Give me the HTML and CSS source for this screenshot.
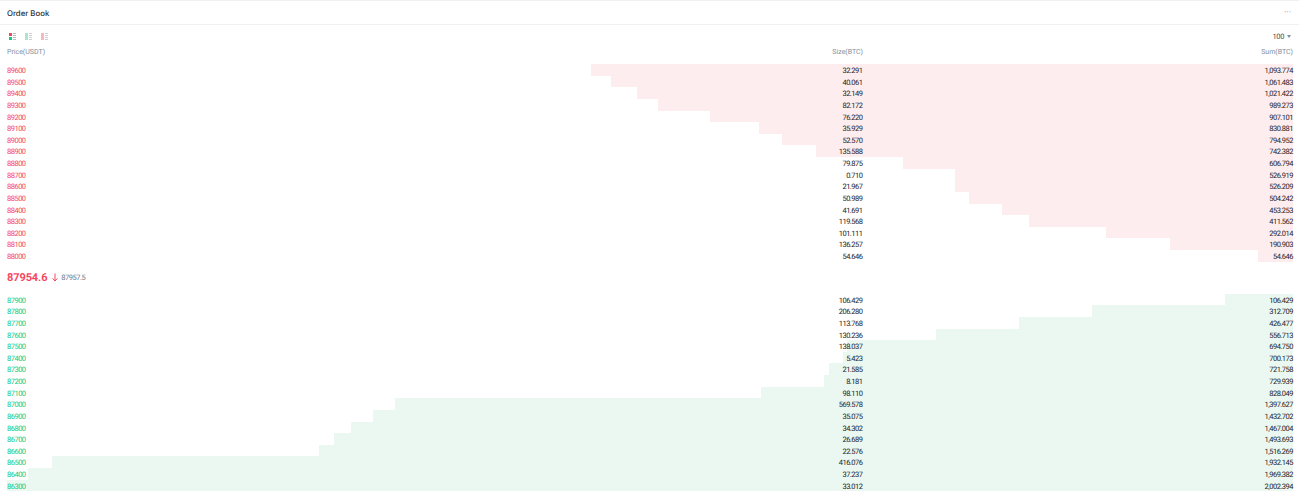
FILE: index.html
```html
<!DOCTYPE html>
<html>
<head>
<meta charset="utf-8">
<title>Order Book</title>
<link rel="stylesheet" href="styles.css">
</head>
<body>

<!-- header -->
<div class="head">
    <span class="title">Order Book</span>
    <span class="more">···</span>
</div>

<!-- view switch and depth -->
<div class="tools">
    <div class="views">
        <svg class="view" viewBox="0 0 7 7"><rect width="3" height="3" fill="#f6465d"/><rect y="4" width="3" height="3" fill="#0ecb81"/><rect x="4" width="3" height="1" fill="#b7bdc6"/><rect x="4" y="2" width="3" height="1" fill="#b7bdc6"/><rect x="4" y="4" width="3" height="1" fill="#b7bdc6"/><rect x="4" y="6" width="3" height="1" fill="#b7bdc6"/></svg>
        <svg class="view" viewBox="0 0 7 7"><rect width="3" height="7" fill="#a9e6cb"/><rect x="4" width="3" height="1" fill="#ccd0d6"/><rect x="4" y="2" width="3" height="1" fill="#ccd0d6"/><rect x="4" y="4" width="3" height="1" fill="#ccd0d6"/><rect x="4" y="6" width="3" height="1" fill="#ccd0d6"/></svg>
        <svg class="view" viewBox="0 0 7 7"><rect width="3" height="7" fill="#fbb6bf"/><rect x="4" width="3" height="1" fill="#ccd0d6"/><rect x="4" y="2" width="3" height="1" fill="#ccd0d6"/><rect x="4" y="4" width="3" height="1" fill="#ccd0d6"/><rect x="4" y="6" width="3" height="1" fill="#ccd0d6"/></svg>
    </div>
    <div class="depth">100 <span class="caret"></span></div>
</div>

<div class="cols">
    <span>Price(USDT)</span>
    <span class="num">Size(BTC)</span>
    <span class="num">Sum(BTC)</span>
</div>

<!-- asks -->
<div class="list asks">
    <div class="row"><i class="bar" style="width:54.62%"></i><span class="price">89600</span><span class="num">32.291</span><span class="num">1,093.774</span></div>
    <div class="row"><i class="bar" style="width:53.01%"></i><span class="price">89500</span><span class="num">40.061</span><span class="num">1,061.483</span></div>
    <div class="row"><i class="bar" style="width:51.01%"></i><span class="price">89400</span><span class="num">32.149</span><span class="num">1,021.422</span></div>
    <div class="row"><i class="bar" style="width:49.40%"></i><span class="price">89300</span><span class="num">82.172</span><span class="num">989.273</span></div>
    <div class="row"><i class="bar" style="width:45.30%"></i><span class="price">89200</span><span class="num">76.220</span><span class="num">907.101</span></div>
    <div class="row"><i class="bar" style="width:41.49%"></i><span class="price">89100</span><span class="num">35.929</span><span class="num">830.881</span></div>
    <div class="row"><i class="bar" style="width:39.70%"></i><span class="price">89000</span><span class="num">52.570</span><span class="num">794.952</span></div>
    <div class="row"><i class="bar" style="width:37.07%"></i><span class="price">88900</span><span class="num">135.588</span><span class="num">742.382</span></div>
    <div class="row"><i class="bar" style="width:30.30%"></i><span class="price">88800</span><span class="num">79.875</span><span class="num">606.794</span></div>
    <div class="row"><i class="bar" style="width:26.31%"></i><span class="price">88700</span><span class="num">0.710</span><span class="num">526.919</span></div>
    <div class="row"><i class="bar" style="width:26.28%"></i><span class="price">88600</span><span class="num">21.967</span><span class="num">526.209</span></div>
    <div class="row"><i class="bar" style="width:25.18%"></i><span class="price">88500</span><span class="num">50.989</span><span class="num">504.242</span></div>
    <div class="row"><i class="bar" style="width:22.64%"></i><span class="price">88400</span><span class="num">41.691</span><span class="num">453.253</span></div>
    <div class="row"><i class="bar" style="width:20.55%"></i><span class="price">88300</span><span class="num">119.568</span><span class="num">411.562</span></div>
    <div class="row"><i class="bar" style="width:14.58%"></i><span class="price">88200</span><span class="num">101.111</span><span class="num">292.014</span></div>
    <div class="row"><i class="bar" style="width:9.53%"></i><span class="price">88100</span><span class="num">136.257</span><span class="num">190.903</span></div>
    <div class="row"><i class="bar" style="width:2.73%"></i><span class="price">88000</span><span class="num">54.646</span><span class="num">54.646</span></div>
</div>

<!-- last price -->
<div class="last">
    <span class="last-price">87954.6</span>
    <svg class="arrow" viewBox="0 0 6 9"><path d="M3 0.5V8M0.6 5.4L3 8l2.4-2.6" fill="none" stroke="#f6465d" stroke-width="1"/></svg>
    <span class="mark">87957.5</span>
</div>

<!-- bids -->
<div class="list bids">
    <div class="row"><i class="bar" style="width:5.32%"></i><span class="price">87900</span><span class="num">106.429</span><span class="num">106.429</span></div>
    <div class="row"><i class="bar" style="width:15.62%"></i><span class="price">87800</span><span class="num">206.280</span><span class="num">312.709</span></div>
    <div class="row"><i class="bar" style="width:21.30%"></i><span class="price">87700</span><span class="num">113.768</span><span class="num">426.477</span></div>
    <div class="row"><i class="bar" style="width:27.80%"></i><span class="price">87600</span><span class="num">130.236</span><span class="num">556.713</span></div>
    <div class="row"><i class="bar" style="width:34.70%"></i><span class="price">87500</span><span class="num">138.037</span><span class="num">694.750</span></div>
    <div class="row"><i class="bar" style="width:34.97%"></i><span class="price">87400</span><span class="num">5.423</span><span class="num">700.173</span></div>
    <div class="row"><i class="bar" style="width:36.05%"></i><span class="price">87300</span><span class="num">21.585</span><span class="num">721.758</span></div>
    <div class="row"><i class="bar" style="width:36.45%"></i><span class="price">87200</span><span class="num">8.181</span><span class="num">729.939</span></div>
    <div class="row"><i class="bar" style="width:41.35%"></i><span class="price">87100</span><span class="num">98.110</span><span class="num">828.049</span></div>
    <div class="row"><i class="bar" style="width:69.80%"></i><span class="price">87000</span><span class="num">569.578</span><span class="num">1,397.627</span></div>
    <div class="row"><i class="bar" style="width:71.55%"></i><span class="price">86900</span><span class="num">35.075</span><span class="num">1,432.702</span></div>
    <div class="row"><i class="bar" style="width:73.26%"></i><span class="price">86800</span><span class="num">34.302</span><span class="num">1,467.004</span></div>
    <div class="row"><i class="bar" style="width:74.60%"></i><span class="price">86700</span><span class="num">26.689</span><span class="num">1,493.693</span></div>
    <div class="row"><i class="bar" style="width:75.72%"></i><span class="price">86600</span><span class="num">22.576</span><span class="num">1,516.269</span></div>
    <div class="row"><i class="bar" style="width:96.49%"></i><span class="price">86500</span><span class="num">416.076</span><span class="num">1,932.145</span></div>
    <div class="row"><i class="bar" style="width:98.35%"></i><span class="price">86400</span><span class="num">37.237</span><span class="num">1,969.382</span></div>
    <div class="row"><i class="bar" style="width:100%"></i><span class="price">86300</span><span class="num">33.012</span><span class="num">2,002.394</span></div>
</div>

</body>
</html>
```

FILE: styles.css
```css
html, body {
    margin: 0;
    background: #fff;
}
body {
    height: 495px;
    overflow: hidden;
    font-family: Roboto, sans-serif;
    font-size: 8px;
    color: #1e2329;
    border-top: 1px solid #f0f1f3;
    box-sizing: border-box;
    text-rendering: geometricPrecision;
}
.head {
    height: 23px;
    padding: 0 8px 0 7px;
    display: flex;
    justify-content: space-between;
    align-items: center;
    border-bottom: 1px solid #eef0f2;
}
.title {
    font-family: Inter, Roboto, sans-serif;
    font-size: 7.8px;
    font-weight: 500;
    color: #2b3139;
}
.more {
    font-size: 9px;
    color: #848e9c;
}
.tools {
    height: 22px;
    padding: 0 8px 0 9px;
    display: flex;
    justify-content: space-between;
    align-items: center;
}
.views {
    display: flex;
    gap: 9px;
}
.view {
    width: 7px;
    height: 7px;
    display: block;
}
.depth {
    display: flex;
    align-items: center;
    gap: 3px;
    font-size: 7.5px;
    letter-spacing: -0.4px;
    color: #474d57;
}
.caret {
    width: 0;
    height: 0;
    border: 2px solid transparent;
    border-top: 3px solid #848e9c;
    border-bottom: 0;
}
.cols {
    height: 10px;
    line-height: 10px;
    padding: 0 6px 0 7px;
    display: grid;
    grid-template-columns: 428px 428px 1fr;
    font-size: 7px;
    color: #848e9c;
}
.list {
    margin: 0 6px 0 7px;
    display: grid;
    grid-auto-rows: 11.625px;
}
.asks {
    margin-top: 7px;
}
.row {
    position: relative;
    display: grid;
    grid-template-columns: 428px 427.5px 1fr;
    font-size: 7.5px;
    letter-spacing: -0.5px;
    line-height: 13px;
}
.row span {
    position: relative;
}
.bar {
    position: absolute;
    top: 0;
    right: 0;
    bottom: 0;
}
.asks .bar {
    background: #feedef;
}
.bids .bar {
    background: #ebf8f2;
}
.asks .price {
    color: #f6465d;
}
.bids .price {
    color: #0ecb81;
}
.num {
    text-align: right;
}
.last {
    height: 32px;
    padding-left: 7px;
    display: flex;
    align-items: center;
}
.last-price {
    font-size: 11px;
    font-weight: 700;
    letter-spacing: -0.1px;
    color: #f6465d;
}
.arrow {
    width: 6px;
    height: 9px;
    margin-left: 5px;
}
.mark {
    margin-left: 3px;
    font-size: 7.5px;
    letter-spacing: -0.5px;
    color: #707a8a;
}
```
